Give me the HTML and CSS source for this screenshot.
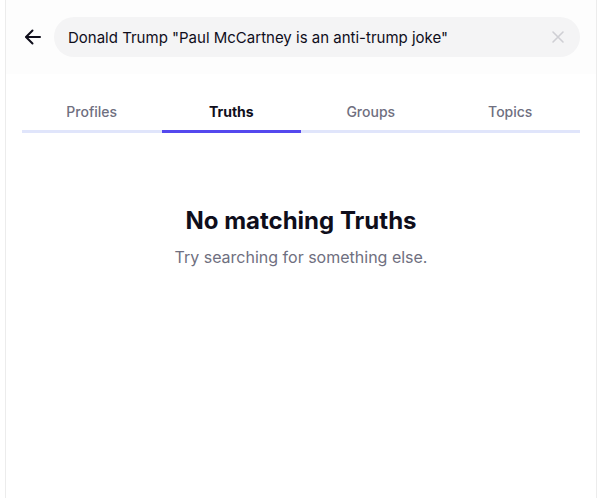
FILE: index.html
```html
<!DOCTYPE html>
<html lang="en">
<head>
<meta charset="utf-8">
<title>Search</title>
<link rel="stylesheet" href="styles.css">
</head>
<body>
  <main class="panel">
    <header class="search-header">
      <button class="back-btn" aria-label="Back">
        <svg width="20" height="20" viewBox="0 0 20 20" fill="none" stroke="currentColor" stroke-width="2" stroke-linecap="round" stroke-linejoin="round">
          <path d="M17 10H3.5"/>
          <path d="M9.5 3.5L3 10l6.5 6.5"/>
        </svg>
      </button>
      <div class="search-box">
        <span class="search-text">Donald Trump "Paul McCartney is an anti-trump joke"</span>
        <button class="clear-btn" aria-label="Clear">
          <svg width="16" height="16" viewBox="0 0 16 16" fill="none" stroke="currentColor" stroke-width="1.6" stroke-linecap="round">
            <path d="M3 3l10 10M13 3L3 13"/>
          </svg>
        </button>
      </div>
    </header>

    <nav class="tabs">
      <a class="tab">Profiles</a>
      <a class="tab active">Truths</a>
      <a class="tab">Groups</a>
      <a class="tab">Topics</a>
    </nav>

    <section class="empty">
      <h2 class="empty-title">No matching Truths</h2>
      <p class="empty-text">Try searching for something else.</p>
    </section>
  </main>
</body>
</html>
```

FILE: styles.css
```css
html, body {
  margin: 0;
  padding: 0;
  background: #ffffff;
  font-family: Inter, "Noto Sans", sans-serif;
  height: 100%;
}

.panel {
  margin-left: 5px;
  width: 590px;
  min-height: 100%;
  border-left: 1px solid #ececec;
  border-right: 1px solid #ececec;
  box-sizing: content-box;
}

.search-header {
  display: flex;
  align-items: center;
  gap: 10px;
  padding: 17px 16px;
  height: 74px;
  box-sizing: border-box;
  background: #fdfdfd;
}

.back-btn {
  border: 0;
  background: none;
  padding: 0;
  width: 22px;
  height: 22px;
  display: flex;
  align-items: center;
  justify-content: center;
  color: #0f0e1b;
}

.search-box {
  flex: 1;
  height: 40px;
  border-radius: 20px;
  background: #f4f4f5;
  display: flex;
  align-items: center;
  padding: 0 14px;
}

.search-text {
  flex: 1;
  font-size: 15px;
  color: #0f0e1b;
}

.clear-btn {
  border: 0;
  background: none;
  padding: 0;
  display: flex;
  color: #cfcfd4;
}

.tabs {
  display: grid;
  grid-template-columns: repeat(4, 1fr);
  margin: 0 16px;
  padding-top: 16px;
}

.tab {
  text-align: center;
  font-size: 14px;
  line-height: 20px;
  font-weight: 500;
  color: #6f6f80;
  padding: 12px 0 8px;
  border-bottom: 3px solid #e0e5fb;
}

.tab.active {
  color: #0f0e1b;
  font-weight: 700;
  border-bottom-color: #5448ee;
}

.empty {
  text-align: center;
  padding-top: 73px;
}

.empty-title {
  margin: 0;
  font-size: 24px;
  line-height: 30px;
  font-weight: 700;
  color: #0f0e1b;
}

.empty-text {
  margin: 10px 0 0;
  font-size: 16px;
  line-height: 22px;
  color: #6f6f80;
}
```
